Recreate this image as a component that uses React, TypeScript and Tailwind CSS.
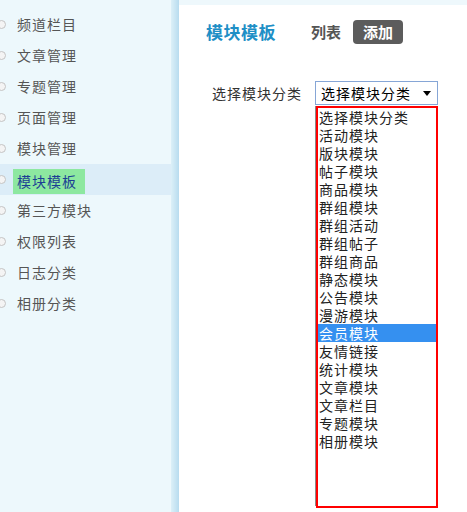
import React from 'react';

const FONT = { fontFamily: '"SimSun", "Noto Sans CJK SC", sans-serif' };

const NAV = ['频道栏目', '文章管理', '专题管理', '页面管理', '模块管理', '模块模板', '第三方模块', '权限列表', '日志分类', '相册分类'];

const OPTIONS = [
  '选择模块分类', '活动模块', '版块模块', '帖子模块', '商品模块', '群组模块', '群组活动', '群组帖子',
  '群组商品', '静态模块', '公告模块', '漫游模块', '会员模块', '友情链接', '统计模块', '文章模块',
  '文章栏目', '专题模块', '相册模块',
];

const App: React.FC = () => {
  const active = '模块模板';
  const selected = '会员模块';

  return (
    <div className="flex w-[467px] h-[512px] overflow-hidden bg-white" style={FONT}>
      {/* sidebar */}
      <aside className="flex w-[179px] h-full bg-[#edf8fc]">
        <ul className="flex-1 pt-[9px]">
          {NAV.map(item => (
            <li
              key={item}
              className={`flex items-center h-[31px] ${item === active ? 'bg-[#dcedf8]' : ''}`}
            >
              <span className="-ml-[3px] w-[9px] h-[9px] rounded-full border border-[#c4c4c4] bg-[#f4f4f4]" />
              {item === active ? (
                <span className="ml-[7px] mt-[3px] h-[25px] w-[72px] pl-[4px] flex items-center bg-[#8de8a0] text-[#1c3f94] text-[14px] tracking-[1px]">
                  {item}
                </span>
              ) : (
                <span className="ml-[11px] text-[14px] tracking-[1px] text-[#555]">{item}</span>
              )}
            </li>
          ))}
        </ul>
        <div className="w-[8px] h-full bg-gradient-to-r from-[#dcf0f8] to-[#b8dcef]" />
      </aside>

      {/* content */}
      <main className="flex-1 flex flex-col">
        <div className="h-[5px] bg-[#eef8fc]" />
        <div className="flex items-center h-[34px] mt-[10px] pl-[27px]">
          <h1 className="text-[17px] font-bold text-[#1e8fc6] tracking-[0.5px]">模块模板</h1>
          <span className="ml-[35px] text-[15px] font-bold text-[#555]">列表</span>
          <button className="ml-[12px] w-[50px] h-[24px] rounded-[4px] bg-[#5c5c5c] text-white text-[15px] font-bold">
            添加
          </button>
        </div>

        <div className="flex mt-[32px]">
          <span className="ml-[33px] mt-[1px] h-[23px] leading-[23px] text-[14px] tracking-[1px] text-[#333]">选择模块分类</span>
          <div className="ml-[13px] flex flex-col">
            <div className="flex items-center w-[123px] h-[24px] border border-[#86a6d6] bg-white pl-[5px]">
              <span className="text-[14px] tracking-[1px] text-black">选择模块分类</span>
              <span className="ml-auto mr-[6px] w-0 h-0 border-l-[4px] border-r-[4px] border-t-[5px] border-l-transparent border-r-transparent border-t-black" />
            </div>
            <div className="flex mt-[1px]">
              <div className="w-[1px] h-[400px] bg-[#8a8a8a]" />
              <div className="w-[122px] h-[402px] border-2 border-[#ff0000] bg-white">
                {OPTIONS.map(o => (
                  <div
                    key={o}
                    className={`h-[18px] leading-[18px] pl-[1px] text-[14px] tracking-[1px] ${
                      o === selected ? 'bg-[#3590f0] text-white' : 'text-[#222]'
                    }`}
                  >
                    {o}
                  </div>
                ))}
              </div>
            </div>
          </div>
        </div>
      </main>
    </div>
  );
};

export default App;
